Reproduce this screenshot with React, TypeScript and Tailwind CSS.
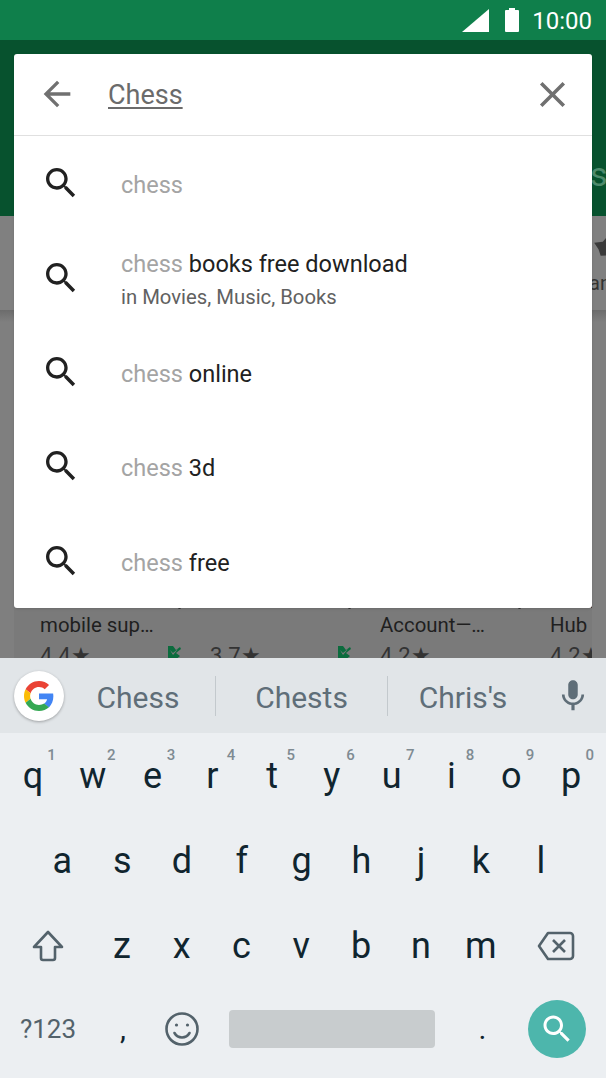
const SEARCH = "M15.5 14h-.79l-.28-.27C15.41 12.59 16 11.11 16 9.5 16 5.91 13.09 3 9.5 3S3 5.91 3 9.5 5.91 16 9.5 16c1.61 0 3.09-.59 4.23-1.57l.27.28v.79l5 4.99L20.49 19l-4.99-5zm-6 0C7.01 14 5 11.99 5 9.5S7.01 5 9.5 5 14 7.01 14 9.5 11.99 14 9.5 14z";

function SearchIcon({ className }: { className: string }) {
  return (
    <svg viewBox="0 0 24 24" className={className} fill="currentColor">
      <path d={SEARCH} />
    </svg>
  );
}

function GoogleG() {
  return (
    <svg viewBox="0 0 48 48" className="w-[30px] h-[30px]">
      <path fill="#EA4335" d="M24 9.5c3.54 0 6.71 1.22 9.21 3.6l6.85-6.85C35.9 2.38 30.47 0 24 0 14.62 0 6.51 5.38 2.56 13.22l7.98 6.19C12.43 13.72 17.74 9.5 24 9.5z" />
      <path fill="#4285F4" d="M46.98 24.55c0-1.57-.15-3.09-.38-4.55H24v9.02h12.94c-.58 2.96-2.26 5.48-4.78 7.18l7.73 6c4.51-4.18 7.09-10.36 7.09-17.65z" />
      <path fill="#FBBC05" d="M10.53 28.59c-.48-1.45-.76-2.99-.76-4.59s.27-3.14.76-4.59l-7.98-6.19C.92 16.46 0 20.12 0 24c0 3.88.92 7.54 2.56 10.78l7.97-6.19z" />
      <path fill="#34A853" d="M24 48c6.48 0 11.93-2.13 15.89-5.81l-7.73-6c-2.15 1.45-4.92 2.3-8.16 2.3-6.26 0-11.57-4.22-13.47-9.91l-7.98 6.19C6.51 42.62 14.62 48 24 48z" />
    </svg>
  );
}

function Suggestion({ rest, sub }: { rest?: string; sub?: string }) {
  return (
    <div className="flex items-center h-[94.4px]">
      <div className="w-[107px] pl-[27px] shrink-0">
        <SearchIcon className="w-10 h-10 text-[#212121]" />
      </div>
      <div className="pt-[4px]">
        <div className="text-[23.5px] leading-[32px] text-[#212121]">
          <span className="text-[#a4a4a4]">chess</span>
          {rest ? ` ${rest}` : ""}
        </div>
        {sub && <div className="text-[20.3px] leading-[28px] mt-[3px] text-[#616161]">{sub}</div>}
      </div>
    </div>
  );
}

function Key({ k, num }: { k: string; num?: string }) {
  return (
    <div className="relative w-[59.8px] shrink-0 h-[85px] flex items-center justify-center text-[36px] text-[#10252f]">
      {k}
      {num && <span className="absolute right-[7px] top-[12px] text-[15px] leading-[20px] font-medium text-[#7f8b92]">{num}</span>}
    </div>
  );
}

const appCols = [
  { top: "Honor", name: "mobile sup…", rate: "4.4", tick: true, menu: true },
  { top: "Phone", name: "", rate: "3.7", tick: true, menu: true },
  { top: "HTC", name: "Account—…", rate: "4.2", tick: false, menu: true },
  { top: "Black", name: "Hub", rate: "4.2", tick: false, menu: false },
];

function Tick() {
  return (
    <svg viewBox="0 0 16 16" className="absolute left-[127px] top-[57px] w-[16px] h-[16px]">
      <path fill="#0b6b3d" d="M1 0h5l3 4 4-3 1 2-5 4 4 3-6 5H1z" />
      <path fill="#7a7a7a" d="M3 4l3 3 5-4-5 6z" />
    </svg>
  );
}

export default function App() {
  return (
    <div className="relative w-[606px] h-[1078px] overflow-hidden bg-[#7f7f7f] font-['Roboto',sans-serif]">
      {/* STATUS BAR */}
      <div className="h-10 bg-[#0f7f4b] flex items-center justify-end pr-[14px] text-white">
        <svg viewBox="0 0 27 23" className="w-[27px] h-[23px] mr-[16px]">
          <path fill="#fff" d="M27 0v23H0z" />
        </svg>
        <svg viewBox="0 0 14 24" className="w-[14px] h-[24px] mr-[13px]">
          <path fill="#fff" d="M4 0h6v2h3a1 1 0 0 1 1 1v20a1 1 0 0 1-1 1H1a1 1 0 0 1-1-1V3a1 1 0 0 1 1-1h3z" />
        </svg>
        <span className="text-[24px] leading-none pt-[2px]">10:00</span>
      </div>

      {/* DIMMED PAGE BEHIND THE SEARCH CARD */}
      <div className="h-[176px] bg-[#07522e] overflow-hidden">
        <div className="ml-[590px] mt-[114px] text-[34px] leading-[40px] text-[#4d8a6c]">s</div>
      </div>
      <div className="h-[94px] bg-[#808080] overflow-hidden">
        <div className="ml-[592px] mt-[16px] w-[30px] text-[20px] leading-[24px] text-[#333]">
          <svg viewBox="0 0 24 24" className="w-[26px] h-[26px]" fill="#3a3a3a">
            <path d="M2 10l8-1 6-7 2 6 6 3v10l-16 1-2-6z" />
          </svg>
          <div className="whitespace-nowrap -ml-[3px] mt-[13px]">an</div>
        </div>
      </div>
      <div className="h-[348px] bg-[linear-gradient(#6c6c6c,#7f7f7f_12px)] pl-[14px] overflow-hidden">
        <div className="w-[578px] h-full overflow-hidden bg-[#7a7a7a] pl-[26px] pt-[279px] flex text-[#1f1f1f] text-[20.4px] leading-[24px]">
          {appCols.map((c) => (
            <div key={c.top} className="relative w-[170px] shrink-0">
              <div className="whitespace-nowrap">{c.top}</div>
              <div className="whitespace-nowrap h-[24px]">{c.name}</div>
              <div className="text-[#333] text-[22px] leading-[28px] mt-[5px]">{c.rate}★</div>
              {c.tick && <Tick />}
              {c.menu && <div className="absolute left-[138px] top-[17px] w-[3px] h-[3px] rounded-full bg-[#333]" />}
            </div>
          ))}
        </div>
      </div>

      {/* SEARCH CARD */}
      <div className="absolute left-[14px] top-[54px] w-[578px] h-[554px] bg-white rounded-[3px] shadow-sm">
        <div className="h-[82px] border-b border-[#e0e0e0] flex items-center justify-between pl-[23px] pr-[18px]">
          <div className="flex items-center">
            <svg viewBox="0 0 24 24" className="w-10 h-10 -mt-[2px]" fill="#707070">
              <path d="M20 11H7.83l5.59-5.59L12 4l-8 8 8 8 1.41-1.41L7.83 13H20v-2z" />
            </svg>
            <span className="ml-[31px] mt-[1px] text-[27px] leading-[36px] text-[#6b6b6b] underline underline-offset-[3px] decoration-[2px]">Chess</span>
          </div>
          <svg viewBox="0 0 24 24" className="w-[43px] h-[43px]" fill="#707070">
            <path d="M19 6.41L17.59 5 12 10.59 6.41 5 5 6.41 10.59 12 5 17.59 6.41 19 12 13.41 17.59 19 19 17.59 13.41 12z" />
          </svg>
        </div>
        <Suggestion />
        <Suggestion rest="books free download" sub="in Movies, Music, Books" />
        <Suggestion rest="online" />
        <Suggestion rest="3d" />
        <Suggestion rest="free" />
      </div>

      {/* KEYBOARD */}
      <div className="absolute left-0 top-[658px] w-[606px] h-[420px] bg-[#eceff2]">
        <div className="h-[75px] bg-[#e1e5e8] flex items-center text-[30px] text-[#5f6e78]">
          <div className="ml-[14px] w-[50px] h-[50px] rounded-full bg-white shadow-[0_1px_3px_rgba(0,0,0,0.3)] flex items-center justify-center">
            <GoogleG />
          </div>
          <div className="ml-[-3px] w-[155px] h-[40px] pt-[4px] flex items-center justify-center border-r border-[#c3c9cd]">Chess</div>
          <div className="w-[172px] h-[40px] pt-[4px] flex items-center justify-center border-r border-[#c3c9cd]">Chests</div>
          <div className="w-[150px] h-[40px] pt-[4px] flex items-center justify-center">Chris's</div>
          <svg viewBox="0 0 24 24" className="ml-[16px] w-[38px] h-[38px]" fill="#5f6e78">
            <path d="M12 14c1.66 0 2.99-1.34 2.99-3L15 5c0-1.66-1.34-3-3-3S9 3.34 9 5v6c0 1.66 1.34 3 3 3zm5.3-3c0 3-2.54 5.1-5.3 5.1S6.7 14 6.7 11H5c0 3.41 2.72 6.23 6 6.72V21h2v-3.28c3.28-.48 6-3.3 6-6.72h-1.7z" />
          </svg>
        </div>

        <div className="flex pl-[3px]">
          {"qwertyuiop".split("").map((k, i) => (
            <Key key={k} k={k} num={String((i + 1) % 10)} />
          ))}
        </div>
        <div className="flex pl-[32.5px]">
          {"asdfghjkl".split("").map((k) => (
            <Key key={k} k={k} />
          ))}
        </div>
        <div className="flex items-center h-[85px] pl-[33px]">
          <svg viewBox="0 0 34 34" className="w-[34px] h-[34px] ml-[-2px] mr-[27px]" fill="none" stroke="#53626b" strokeWidth="2.6" strokeLinejoin="round">
            <path d="M17 3L3 18h7v11a2 2 0 0 0 2 2h10a2 2 0 0 0 2-2V18h7z" />
          </svg>
          <div className="flex">
            {"zxcvbnm".split("").map((k) => (
              <Key key={k} k={k} />
            ))}
          </div>
          <svg viewBox="0 0 38 32" className="w-[38px] h-[32px] ml-[26px]" fill="none" stroke="#53626b" strokeWidth="2.6" strokeLinejoin="round">
            <path d="M11 3h22a3 3 0 0 1 3 3v20a3 3 0 0 1-3 3H11L2 16z" />
            <path d="M16 10l12 12M28 10L16 22" />
          </svg>
        </div>
        <div className="flex items-center h-[85px] -mt-[2px] text-[#53626b]">
          <div className="w-[96px] pt-[2px] text-center text-[26px]">?123</div>
          <div className="w-[54px] text-center text-[30px] text-[#10252f]">,</div>
          <svg viewBox="0 0 36 36" className="w-[36px] h-[36px] ml-[14px] mr-[29px]" fill="none" stroke="#53626b" strokeWidth="2.6" strokeLinecap="round">
            <circle cx="18" cy="18" r="15.5" />
            <circle cx="12.5" cy="14" r="1.6" fill="#53626b" stroke="none" />
            <circle cx="23.5" cy="14" r="1.6" fill="#53626b" stroke="none" />
            <path d="M10.5 22c2 3.5 4.5 4.5 7.5 4.5s5.500-1 7.500-4.500" />
          </svg>
          <div className="w-[206px] h-[38px] rounded-[4px] bg-[#c8ccce]" />
          <div className="w-[93px] pl-[2px] text-center text-[30px] text-[#10252f]">.</div>
          <div className="w-[58px] h-[58px] rounded-full bg-[#4db6ac] flex items-center justify-center">
            <SearchIcon className="w-[36px] h-[36px] text-white" />
          </div>
        </div>
      </div>
    </div>
  );
}
